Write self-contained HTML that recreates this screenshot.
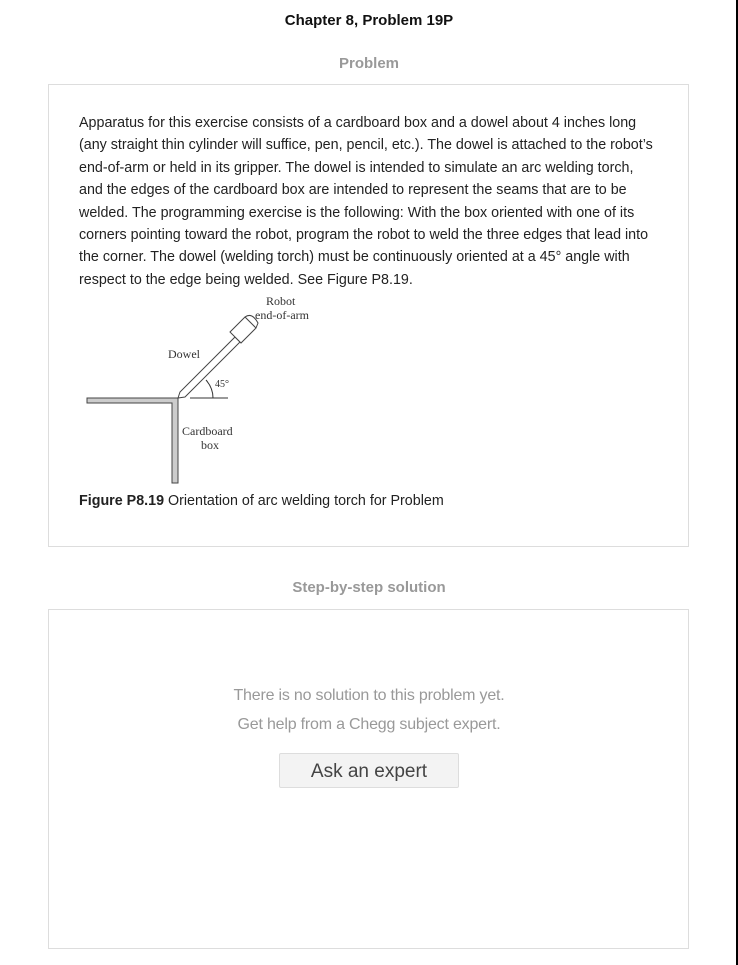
<!DOCTYPE html>
<html><head><style>
body{margin:0;width:738px;height:965px;background:#fff;font-family:"Liberation Sans",Arial,sans-serif;position:relative;overflow:hidden}
.vl{position:absolute;left:736px;top:0;width:2px;height:965px;background:#000}
h1{position:absolute;top:12px;left:0;width:738px;text-align:center;font-size:15px;font-weight:bold;margin:0;color:#111}
.h2{position:absolute;left:0;width:738px;text-align:center;font-size:15px;font-weight:bold;color:#999}
.box{position:absolute;left:48px;width:639px;border:1px solid #ddd}
.txt{position:absolute;left:79px;top:112px;font-size:14.3px;line-height:22.4px;color:#222;white-space:nowrap;letter-spacing:0}
.cap{position:absolute;left:79px;top:493px;font-size:14.3px;color:#222;white-space:nowrap;letter-spacing:0}
.msg{position:absolute;left:0;width:738px;text-align:center;font-size:16px;color:#999;letter-spacing:-0.2px}
.btn{position:absolute;left:279px;top:753px;width:178px;height:33px;border:1px solid #ddd;background:#f3f3f3;border-radius:2px;text-align:center;line-height:36px;font-size:19px;color:#444}
</style></head><body>
<div class="vl"></div>
<h1>Chapter 8, Problem 19P</h1>
<div class="h2" style="top:55px">Problem</div>
<div class="box" style="top:84px;height:461px"></div>
<div class="txt">Apparatus for this exercise consists of a cardboard box and a dowel about 4 inches long<br>(any straight thin cylinder will suffice, pen, pencil, etc.). The dowel is attached to the robot’s<br>end-of-arm or held in its gripper. The dowel is intended to simulate an arc welding torch,<br>and the edges of the cardboard box are intended to represent the seams that are to be<br>welded. The programming exercise is the following: With the box oriented with one of its<br>corners pointing toward the robot, program the robot to weld the three edges that lead into<br>the corner. The dowel (welding torch) must be continuously oriented at a 45° angle with<br>respect to the edge being welded. See Figure P8.19.</div>
<svg style="position:absolute;left:80px;top:290px" width="260" height="200" font-family="Liberation Serif,serif" font-size="12" fill="#333">
<path d="M7 108H98V193H92V113H7Z" fill="#ccc" stroke="#444" stroke-width="1"/>
<line x1="98" y1="108" x2="98" y2="193" stroke="#444"/>
<path d="M98 108 L100 102 L155 47 L160 52 L105 107 Z" fill="#fff" stroke="#444"/>
<path d="M150 42 L165 27 L176 38 L161 53 Z M165 27 Q172 22 178 33 L176 38" fill="#fff" stroke="#444"/>
<line x1="110" y1="108" x2="148" y2="108" stroke="#333"/>
<path d="M126 90 Q133 98 133 108" fill="none" stroke="#333"/>
<text x="186" y="15">Robot</text><text x="175" y="29">end-of-arm</text>
<text x="88" y="68">Dowel</text>
<text x="135" y="97" font-size="10">45°</text>
<text x="102" y="145">Cardboard</text><text x="121" y="159">box</text>
</svg>
<div class="cap"><b>Figure P8.19</b> Orientation of arc welding torch for Problem</div>
<div class="h2" style="top:579px">Step-by-step solution</div>
<div class="box" style="top:609px;height:338px"></div>
<div class="msg" style="top:687px">There is no solution to this problem yet.</div>
<div class="msg" style="top:716px">Get help from a Chegg subject expert.</div>
<div class="btn">Ask an expert</div>
</body></html>
